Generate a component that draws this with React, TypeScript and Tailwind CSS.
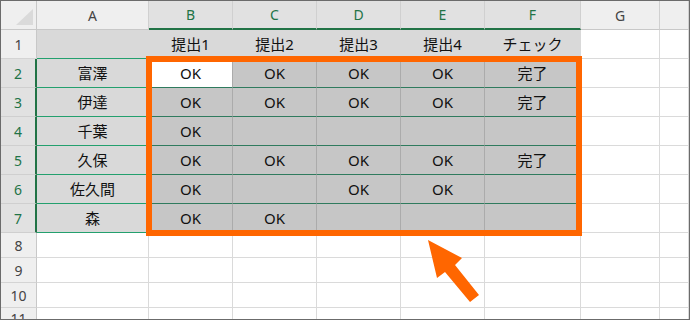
import React from "react";

const COLS = ["A", "B", "C", "D", "E", "F", "G", ""];
const HEADS = ["", "提出1", "提出2", "提出3", "提出4", "チェック"];
const NAMES = ["富澤", "伊達", "千葉", "久保", "佐久間", "森"];
const MARKS: string[][] = [
  ["OK", "OK", "OK", "OK", "完了"],
  ["OK", "OK", "OK", "OK", "完了"],
  ["OK", "", "", "", ""],
  ["OK", "OK", "OK", "OK", "完了"],
  ["OK", "", "OK", "OK", ""],
  ["OK", "OK", "", "", ""],
];

const center = "flex items-center justify-center";

function ColHeader({ label, idx }: { label: string; idx: number }) {
  const picked = idx >= 1 && idx <= 5;
  return (
    <div
      className={
        center +
        " text-[14px] border-r border-r-[#d0d0d0] " +
        (picked
          ? "bg-[#e1e1e1] text-[#217346] border-b-2 border-b-[#217346]"
          : "bg-[#efefef] text-[#444444] border-b border-b-[#c8c8c8]")
      }
    >
      {label}
    </div>
  );
}

function RowHeader({ n, picked }: { n: number; picked: boolean }) {
  return (
    <div
      className={
        center +
        " text-[14px] border-b " +
        (picked
          ? "bg-[#e1e1e1] text-[#217346] border-r-2 border-r-[#217346] border-b-[#cfcfcf]"
          : "bg-[#efefef] text-[#444444] border-r border-r-[#c8c8c8] border-b-[#d4d4d4]")
      }
    >
      {n}
    </div>
  );
}

function Blank() {
  return <div className="bg-white border-r border-b border-[#dadada]" />;
}

export default function App() {
  return (
    <div className="relative w-[690px] h-[320px] overflow-hidden bg-white font-['Noto_Sans','Noto_Sans_CJK_JP',sans-serif] text-[#111111]">
      <div className="w-full h-full border border-[#6b6b6b] grid grid-cols-[36px_112px_84px_84px_84px_84px_96px_79px_1fr] grid-rows-[29px_29px_29px_29px_29px_29px_29px_29px_25px_25px_25px_1fr] overflow-hidden">
        {/* select-all corner */}
        <div className="bg-[#efefef] border-r border-b border-[#c8c8c8] flex items-end justify-end pr-[3px] pb-[4px]">
          <svg width="17" height="16" viewBox="0 0 17 16">
            <polygon points="17,0 17,16 0,16" fill="#dadada" />
          </svg>
        </div>
        {COLS.map((c, i) => (
          <ColHeader key={"h" + i} label={c} idx={i} />
        ))}

        {/* row 1: titles */}
        <RowHeader n={1} picked={false} />
        {HEADS.map((t, i) => (
          <div
            key={"t" + i}
            className={
              center +
              " bg-[#d9d9d9] text-[15px] border-r border-r-[#d9d9d9] border-b " +
              (i === 0 ? "border-b-[#23a06e]" : "border-b-[#d9d9d9]")
            }
          >
            {t}
          </div>
        ))}
        <Blank />
        <Blank />

        {/* rows 2-7: names and marks */}
        {NAMES.map((name, r) => (
          <React.Fragment key={"r" + r}>
            <RowHeader n={r + 2} picked />
            <div className={center + " bg-[#d9d9d9] text-[15px] border-r border-r-[#d9d9d9] border-b border-b-[#23a06e]"}>
              {name}
            </div>
            {MARKS[r].map((m, c) => (
              <div
                key={"m" + c}
                className={
                  center +
                  " text-[15px] border-r border-r-[#ababab] border-b border-b-[#2f7b5e] " +
                  (r === 0 && c === 0 ? "bg-white" : "bg-[#c6c6c6]")
                }
              >
                {m}
              </div>
            ))}
            <Blank />
            <Blank />
          </React.Fragment>
        ))}

        {/* empty rows 8-11 */}
        {[8, 9, 10, 11].map((n) => (
          <React.Fragment key={"e" + n}>
            <RowHeader n={n} picked={false} />
            {[0, 1, 2, 3, 4, 5, 6, 7].map((k) => (
              <Blank key={k} />
            ))}
          </React.Fragment>
        ))}
      </div>

      {/* highlight frame around B2:F7 */}
      <div className="absolute left-[146px] top-[56px] w-[436px] h-[180px] border-[6px] border-[#ff6600] pointer-events-none" />

      {/* pointer arrow */}
      <svg
        className="absolute left-0 top-0 pointer-events-none"
        width="690"
        height="320"
        viewBox="0 0 690 320"
      >
        <polygon
          points="428,240 462,258 455,265 479,295 470,302 445,272 437,278"
          fill="#ff6600"
        />
      </svg>
    </div>
  );
}
